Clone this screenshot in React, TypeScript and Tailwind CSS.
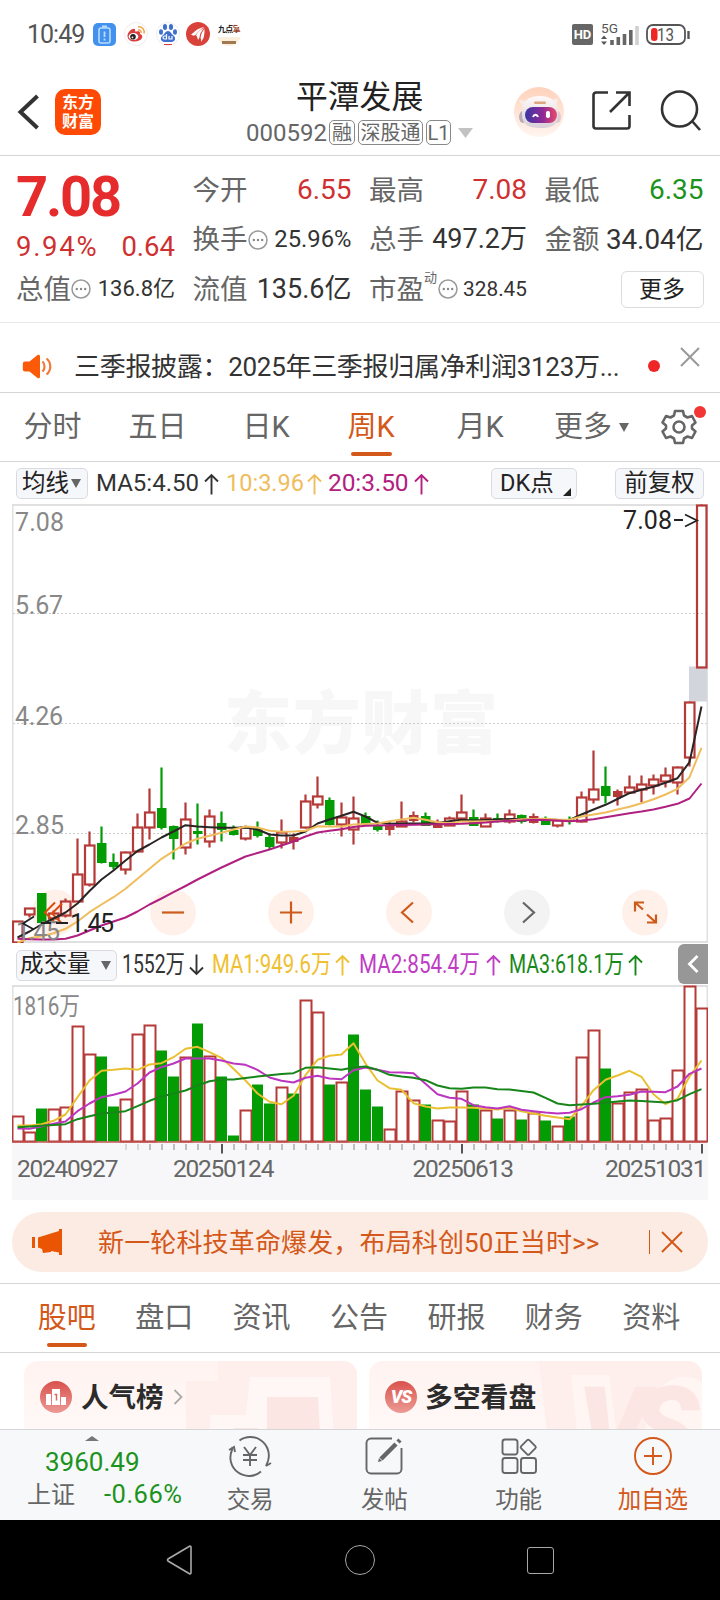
import type { ReactNode } from "react";

type Kind = "up" | "solid" | "down";

// [kind, high, body top, body bottom, low]
const candles: [Kind, number, number, number, number][] = [
  ["up", 921, 921, 942, 942],
  ["up", 908, 908, 914, 917],
  ["down", 893, 893, 922, 923],
  ["up", 910, 913, 918, 918],
  ["up", 898, 901, 915, 917],
  ["up", 838, 874, 901, 901],
  ["up", 831, 845, 884, 886],
  ["down", 826, 843, 862, 863],
  ["down", 853, 862, 866, 869],
  ["up", 851, 852, 869, 874],
  ["up", 813, 827, 851, 852],
  ["up", 788, 812, 827, 839],
  ["down", 767, 808, 827, 829],
  ["down", 825, 826, 838, 859],
  ["up", 802, 819, 847, 854],
  ["down", 803, 831, 833, 844],
  ["up", 809, 816, 841, 847],
  ["down", 811, 823, 829, 841],
  ["down", 825, 830, 834, 835],
  ["up", 825, 827, 838, 840],
  ["down", 821, 828, 835, 837],
  ["down", 833, 837, 846, 849],
  ["up", 819, 832, 842, 848],
  ["solid", 833, 837, 841, 849],
  ["up", 794, 801, 827, 828],
  ["up", 776, 796, 804, 808],
  ["down", 797, 800, 824, 825],
  ["up", 802, 817, 824, 836],
  ["up", 796, 818, 829, 844],
  ["down", 812, 816, 823, 823],
  ["down", 820, 825, 829, 831],
  ["solid", 821, 826, 829, 835],
  ["up", 801, 821, 826, 826],
  ["solid", 811, 815, 820, 822],
  ["down", 812, 816, 825, 825],
  ["solid", 819, 822, 827, 827],
  ["up", 816, 818, 825, 825],
  ["up", 794, 812, 818, 818],
  ["down", 809, 817, 825, 825],
  ["up", 813, 818, 826, 826],
  ["down", 813, 818, 820, 822],
  ["up", 809, 814, 821, 823],
  ["down", 814, 815, 821, 823],
  ["solid", 813, 816, 822, 823],
  ["down", 816, 818, 824, 824],
  ["up", 820, 820, 825, 827],
  ["down", 816, 819, 821, 824],
  ["up", 791, 797, 821, 822],
  ["up", 750, 789, 799, 803],
  ["down", 766, 786, 795, 803],
  ["solid", 789, 791, 796, 805],
  ["up", 775, 787, 792, 793],
  ["up", 775, 784, 789, 802],
  ["up", 774, 779, 785, 794],
  ["up", 767, 775, 781, 787],
  ["up", 766, 767, 782, 794],
  ["up", 701, 702, 757, 766],
  ["up", 504, 505, 667, 667],
];

const volumeTops = [
  1116, 1132, 1108, 1109, 1107, 1026, 1054, 1056, 1106, 1099, 1034, 1025, 1050, 1076, 1057, 1023, 1056, 1076, 1135,
  1110, 1084, 1103, 1087, 1093, 1000, 1012, 1084, 1082, 1034, 1089, 1106, 1129, 1091, 1100, 1104, 1120, 1121, 1091,
  1104, 1110, 1118, 1110, 1119, 1113, 1120, 1126, 1116, 1057, 1030, 1068, 1103, 1092, 1089, 1120, 1118, 1070, 986,
  1008,
];
const volumeDown = [2, 7, 8, 12, 13, 15, 17, 18, 20, 21, 23, 26, 28, 29, 30, 34, 38, 40, 42, 44, 46, 49];

const ma5 = [
  937, 931, 924, 918, 912, 903, 890.5, 879, 870, 860, 850.5, 844, 837, 831, 824.7, 826, 826.7, 827.3, 827.3, 827, 829,
  834, 835, 835, 831, 823, 819, 815.3, 811.3, 816, 822.3, 823.3, 823, 823, 823, 822.5, 820.7, 819.3, 820, 819.5, 819,
  818.5, 818.5, 818.7, 819, 819.5, 819.5, 814, 809, 804.3, 798.5, 792.7, 789.3, 786.3, 782.3, 777.7, 761.7, 706,
];
const ma10 = [
  942, 937.5, 936, 932.7, 928.3, 921, 911.7, 904, 896.7, 888.3, 878.3, 868.3, 858.3, 850.7, 843, 838.3, 835.3, 832.3,
  829, 826, 827, 830.3, 831.3, 831, 830.3, 825.7, 826, 826, 824, 823.5, 823, 820.7, 819, 817.3, 819.3, 821.7, 822.7,
  821, 821, 820.7, 820.5, 820, 818.7, 818.5, 818.3, 819, 819.3, 816, 814, 812, 809, 806.3, 802.7, 798.7, 794, 788.3,
  776.7, 747.3,
];
const ma20 = [
  938.3, 938.7, 939, 939, 938.3, 935, 930, 925, 921, 917, 911, 904, 898, 891.7, 885.5, 879, 873, 867, 861.5, 856, 852.5,
  849, 845, 841, 836, 832, 830.3, 828.7, 826.5, 825.3, 825, 824.7, 824.5, 824.3, 824, 823.7, 823.5, 823.3, 822.7, 822,
  821, 820.3, 820, 819.3, 819.5, 820, 820.7, 820, 818.7, 816.7, 814.7, 812.7, 811, 809, 806.3, 803.3, 798, 783,
];
const vol1 = [
  1125, 1125, 1123.7, 1120.3, 1114, 1096.7, 1080, 1070.3, 1069.3, 1068, 1069.3, 1064, 1062.7, 1056.7, 1048.3, 1046.3,
  1051.7, 1057.3, 1068.3, 1080, 1093, 1101.3, 1103.7, 1095.3, 1074.7, 1059.3, 1055.3, 1054, 1042.7, 1063, 1080, 1087.7,
  1089.3, 1102.7, 1106, 1108, 1107, 1107, 1107.3, 1108, 1109, 1107.3, 1110.7, 1113, 1115.3, 1117, 1118.7, 1105.7,
  1089.7, 1079.3, 1075, 1070.3, 1076.3, 1093.7, 1103.7, 1098.3, 1076, 1060,
];
const vol2 = [
  1128, 1128.3, 1126, 1123.3, 1121, 1110.7, 1103, 1096.7, 1094.3, 1091, 1083, 1072, 1066.7, 1063, 1058, 1058, 1058,
  1060, 1063, 1064.3, 1069.3, 1077, 1080.3, 1082, 1077.3, 1075.3, 1078, 1078.7, 1069.7, 1067, 1069.3, 1071.7, 1072,
  1072.7, 1083.3, 1093.7, 1097.3, 1098.3, 1104.7, 1106.7, 1108, 1105.7, 1109.3, 1110.7, 1112, 1113, 1112.3, 1108.7,
  1102, 1096.7, 1095.7, 1094.3, 1091, 1091.3, 1091.7, 1086, 1073.3, 1068,
];
const vol3 = [
  1126.7, 1126, 1125.3, 1124.5, 1123.7, 1118.7, 1115.7, 1113, 1112, 1110.7, 1105.7, 1100.3, 1096, 1093, 1090, 1085,
  1080.7, 1079, 1079, 1077.5, 1076, 1074.7, 1073.5, 1072.7, 1067.3, 1066.7, 1068, 1069.3, 1067, 1066, 1069.3, 1074.3,
  1076, 1077.3, 1079.7, 1085, 1087.7, 1088.3, 1087, 1087, 1088.7, 1089, 1090.5, 1092, 1097.3, 1103, 1104.7, 1104,
  1103.3, 1102.3, 1101, 1100, 1100.5, 1101.3, 1102, 1099.7, 1093.7, 1088.7,
];

const RED = "#b53a38";
const GREEN = "#049c04";
const cx = (i: number) => 17.5 + i * 12;
const toPoints = (ys: number[]) => ys.map((y, i) => `${cx(i)},${y}`).join(" ");

function Line({ ys, color }: { ys: number[]; color: string }) {
  return <polyline points={toPoints(ys)} fill="none" stroke={color} strokeWidth="2" strokeLinejoin="round" />;
}

function Arrow({ down = false }: { down?: boolean }) {
  return (
    <svg width="15" height="22" viewBox="0 0 15 22" className={`shrink-0 ${down ? "rotate-180" : ""}`}>
      <path d="M7.5 21.5V2M1 8.5 7.5 2 14 8.5" fill="none" stroke="currentColor" strokeWidth="1.9" />
    </svg>
  );
}

function Caret({ className = "" }: { className?: string }) {
  return (
    <svg width="10" height="9" viewBox="0 0 10 9" className={`shrink-0 ${className}`}>
      <path d="M0 0h10L5 9z" fill="currentColor" />
    </svg>
  );
}

function StatusBar() {
  return (
    <div className="flex h-[68px] items-center pl-[27px] pr-[30px] text-[#555]">
      <span className="w-[66px] text-[25px] tracking-[-1px]">10:49</span>
      <svg width="23" height="23" viewBox="0 0 23 23">
        <rect width="23" height="23" rx="5" fill="#4391ee" />
        <rect x="6" y="5" width="11" height="15" rx="2" fill="none" stroke="#b9dbff" strokeWidth="1.6" />
        <path d="M9 3.5h5M11.5 8.5v5.5M11.5 15.5v2" stroke="#b9dbff" strokeWidth="1.8" />
      </svg>
      <svg width="24" height="24" viewBox="0 0 24 24" className="ml-2">
        <circle cx="12" cy="12" r="11.5" fill="#fff" stroke="#eee" />
        <path d="M3.5 14c0-4 5-8 7-7 1.500.8 0 2.500 1 2.500s4.500-1 4.500 1c0 1-.5 1.500 1 2 3 1.500 1 7-6.500 7-4 0-7-2-7-5.500z" fill="#dc3d3d" />
        <ellipse cx="9.500" cy="14.500" rx="4.800" ry="3.600" fill="#fff" />
        <circle cx="9" cy="14.800" r="2.800" fill="#222" />
        <circle cx="8.500" cy="15.300" r="0.900" fill="#fff" />
        <path d="M14 8c2-.5 3.500 1 3 3M14 5c4-.8 7 2.500 6 6.500" fill="none" stroke="#f0a64a" strokeWidth="1.500" />
      </svg>
      <svg width="24" height="24" viewBox="0 0 24 24" className="ml-2">
        <circle cx="12" cy="12" r="11.5" fill="#fff" stroke="#eee" />
        <g fill="#3f70cf">
          <ellipse cx="9" cy="5" rx="2.100" ry="3" />
          <ellipse cx="15" cy="5" rx="2.100" ry="3" />
          <ellipse cx="5" cy="10" rx="2" ry="2.800" />
          <ellipse cx="19" cy="10" rx="2" ry="2.800" />
          <path d="M12 9c2.500 0 3.500 3 5.500 4.500 3 2.500 1.500 6.500-2 6.500H8.500c-3.500 0-5-4-2-6.500C8.500 12 9.500 9 12 9z" />
        </g>
        <path d="M10.500 12v5h-2a1.500 1.500 0 0 1 0-3h2M13 14v3h3v-3" fill="none" stroke="#fff" strokeWidth="1.200" />
        <path d="M8 22.500h8" stroke="#dc3d3d" />
      </svg>
      <svg width="24" height="24" viewBox="0 0 24 24" className="ml-1.5">
        <circle cx="12" cy="12" r="12" fill="#d8423a" />
        <path
          d="M5 12.500C8 11 9 7 18.500 5 15 7 12 9 10 12.500c-1.500 1.500-3 1.500-5 0zM10 13.500c2-4 4.500-6 8.500-7.500-3 3-4.500 5-5 9.500l-1.500 2.500c-.5-2-.5-3-2-4.500zM14.500 16c.5-4 2-7 4-9 0 4-.2 6-1 9l-2.500 4c.3-2 .2-2.500-.5-4z"
          fill="#fff"
        />
      </svg>
      <div className="ml-[7px] flex h-6 w-6 flex-col overflow-hidden rounded-full bg-[#fbeedd] text-center">
        <span className="-mx-2 h-[15px] whitespace-nowrap bg-white pt-1 text-[8px] font-bold tracking-[-0.5px] text-[#222]">
          九点<span className="text-[#9c3b20]">掌</span>
        </span>
        <span className="mx-auto mt-1 h-[3px] w-3.5 bg-[#a1784f]" />
      </div>

      <div className="ml-auto flex items-center">
        <span className="flex h-[21px] w-[21px] items-center justify-center rounded-[2px] bg-[#666] text-[13px] font-bold text-white">
          HD
        </span>
        <svg width="40" height="23" viewBox="0 0 40 23" className="ml-[7px]">
          <text x="1" y="9.500" fontSize="12.500" fill="#555" textLength="17" lengthAdjust="spacingAndGlyphs">
            5G
          </text>
          <path d="M1 16h6L4 12.500zM1 18.500h6L4 22z" fill="#555" />
          <path d="M12 22v-5M18.300 22v-8M24.500 22V11M30.800 22V7" stroke="#666" strokeWidth="3.600" />
          <path d="M37 22V3" stroke="#d0d0d0" strokeWidth="3.600" />
        </svg>
        <svg width="44" height="21" viewBox="0 0 44 21" className="ml-1.5">
          <rect x="1" y="1" width="38" height="19" rx="6" fill="none" stroke="#555" strokeWidth="1.800" />
          <rect x="5" y="4" width="6.500" height="13" rx="3" fill="#ee2626" />
          <text x="11" y="16.800" fontSize="18" fill="#555" textLength="17" lengthAdjust="spacingAndGlyphs">
            13
          </text>
          <path d="M42.500 7v8" stroke="#555" strokeWidth="2.400" />
        </svg>
      </div>
    </div>
  );
}

function Tag({ children, className }: { children: ReactNode; className: string }) {
  return (
    <span
      className={`flex h-[25px] items-center justify-center whitespace-nowrap rounded-[5px] border-[1.5px] border-[#888] text-[20px] text-[#666] ${className}`}
    >
      {children}
    </span>
  );
}

function Header() {
  return (
    <header className="flex h-[88px] items-center border-b border-[#d4d4d4]">
      <svg width="22" height="36" viewBox="0 0 22 36" className="ml-[17px]">
        <path d="M20.500 2 3.500 18l17 16" fill="none" stroke="#333" strokeWidth="4" />
      </svg>
      <div className="ml-4 grid h-[46px] w-[46px] content-center rounded-[10px] bg-[#fe4a04] text-center text-[16px] font-bold leading-[19px] text-white">
        <span>东方</span>
        <span>财富</span>
      </div>
      <div className="ml-[145px] flex w-[226px] flex-col items-start pt-[3px]">
        <h1 className="ml-[50px] text-[31.8px] leading-[39px] text-[#222]">平潭发展</h1>
        <div className="flex h-[32px] items-center gap-[3px]">
          <span className="w-[80px] text-[24px] text-[#666]">000592</span>
          <Tag className="w-[26px]">融</Tag>
          <Tag className="w-[65px]">深股通</Tag>
          <Tag className="w-[25px]">L1</Tag>
          <svg width="15" height="10" viewBox="0 0 15 10" className="ml-1">
            <path d="M0 0h15L7.500 10z" fill="#c2c2c2" />
          </svg>
        </div>
      </div>
      <svg width="50" height="50" viewBox="0 0 50 50" className="ml-[42px]">
        <defs>
          <linearGradient id="halo" x1="0" y1="0" x2="0" y2="1">
            <stop offset="0" stopColor="#ffd2bb" />
            <stop offset="1" stopColor="#fff5f0" />
          </linearGradient>
          <linearGradient id="visor">
            <stop offset="0" stopColor="#3936a4" />
            <stop offset="0.550" stopColor="#8c2a98" />
            <stop offset="1" stopColor="#ea4a68" />
          </linearGradient>
          <linearGradient id="shell" x1="0" y1="0" x2="0" y2="1">
            <stop offset="0" stopColor="#fffaf8" />
            <stop offset="1" stopColor="#d9d0d8" />
          </linearGradient>
        </defs>
        <circle cx="25" cy="25" r="25" fill="url(#halo)" />
        <path d="m5 13 10 1-5 8zM44 11l-9 3 7 8z" fill="#f6ece9" />
        <ellipse cx="9" cy="30" rx="4" ry="6" fill="#b9aeb8" />
        <ellipse cx="43" cy="30" rx="4" ry="6" fill="#dccbd0" />
        <path d="M8 27C8 14 14 9 26 9s18 6 18 18-7 14-18 14S8 38 8 27z" fill="url(#shell)" />
        <rect x="20" y="14.500" width="12" height="2.500" rx="1.200" fill="#dfa57e" />
        <rect x="11" y="20" width="32" height="16" rx="8" fill="url(#visor)" />
        <path d="M19 30c1-3 4-3 5 0" fill="none" stroke="#fff" strokeWidth="2" />
        <rect x="32" y="24" width="4" height="7" rx="1.800" fill="#fff" />
      </svg>
      <svg width="40" height="40" viewBox="0 0 40 40" className="-mt-1 ml-[27px]" fill="none" stroke="#333" strokeWidth="2.600">
        <path d="M17 2.500H5a2.500 2.500 0 0 0-2.500 2.500v31A2.500 2.500 0 0 0 5 38.500h31a2.500 2.500 0 0 0 2.500-2.500V25M25 2.500h13.500V16M38 3 19 22" />
      </svg>
      <svg width="42" height="42" viewBox="0 0 42 42" className="-mt-1 ml-[29px]" fill="none" stroke="#333" strokeWidth="2.600">
        <circle cx="19.500" cy="20" r="17.500" />
        <path d="m32 32 8 9" />
      </svg>
    </header>
  );
}

function Dots() {
  return (
    <svg width="20" height="20" viewBox="0 0 20 20" className="shrink-0">
      <circle cx="10" cy="10" r="9" fill="none" stroke="#999" strokeWidth="1.500" />
      <g fill="#888">
        <circle cx="5.800" cy="10" r="1.200" />
        <circle cx="10" cy="10" r="1.200" />
        <circle cx="14.200" cy="10" r="1.200" />
      </g>
    </svg>
  );
}

function Stat({
  label,
  value,
  dots,
  sup,
  className = "text-[27px] text-[#333]",
}: {
  label: string;
  value: string;
  dots?: boolean;
  sup?: string;
  className?: string;
}) {
  return (
    <div className="flex h-[49.5px] items-center whitespace-nowrap">
      <span className="text-[27.5px] text-[#666]">{label}</span>
      {sup && <span className="mb-6 w-[14px] text-[13px] text-[#666]">{sup}</span>}
      {dots && <Dots />}
      <span className={`ml-auto ${className}`}>{value}</span>
    </div>
  );
}

function Quote() {
  return (
    <section className="grid h-[167px] grid-cols-[159px_159px_158px_159px] gap-x-[17.5px] border-b border-[#e8e8e8] pl-4 pt-[9.5px]">
      <div>
        <div className="flex h-[63px] items-center text-[56px] font-bold tracking-[-2.2px] text-[#e52b2b]">7.08</div>
        <div className="flex h-[36px] items-center justify-between text-[27.5px] text-[#cf3131]">
          <span className="tracking-[1.7px]">9.94%</span>
          <span>0.64</span>
        </div>
        <Stat label="总值" value="136.8亿" dots className="text-[22px] text-[#333]" />
      </div>
      <div>
        <Stat label="今开" value="6.55" className="text-[28px] text-[#cf3131]" />
        <Stat label="换手" value="25.96%" dots className="text-[23.8px] text-[#333]" />
        <Stat label="流值" value="135.6亿" />
      </div>
      <div>
        <Stat label="最高" value="7.08" className="text-[28px] text-[#cf3131]" />
        <Stat label="总手" value="497.2万" />
        <Stat label="市盈" sup="动" value="328.45" dots className="text-[20.8px] text-[#333]" />
      </div>
      <div>
        <Stat label="最低" value="6.35" className="text-[28px] text-[#1c931c]" />
        <Stat label="金额" value="34.04亿" className="text-[27.8px] text-[#333]" />
        <div className="flex h-[49.5px] items-center justify-end">
          <button className="h-[37px] w-[83px] rounded-md border border-[#dcdcdc] text-[23px] text-[#222]">更多</button>
        </div>
      </div>
    </section>
  );
}

function News() {
  return (
    <div className="flex h-[70px] items-center border-b border-[#d4d4d4] pt-[17px]">
      <svg width="30" height="25" viewBox="0 0 30 25" className="ml-[22px]">
        <path d="M3 7.500h4.500L15.500 1c1-.7 2.500-.2 2.500 1.200v20.600c0 1.400-1.500 1.900-2.500 1.200L7.500 17.500H3a2.200 2.200 0 0 1-2.200-2.200V9.700A2.200 2.200 0 0 1 3 7.500z" fill="#fb5a09" />
        <path d="M20.500 7.500c2.700 2.500 2.700 7.500 0 10M24.500 4.500c5 4 5 12 0 16" fill="none" stroke="#f07a38" strokeWidth="2.200" />
      </svg>
      <p className="ml-[22px] w-[550px] whitespace-nowrap pt-0.5 text-[26px] tracking-[-0.3px] text-[#333]">
        三季报披露：2025年三季报归属净利润3123万...
      </p>
      <span className="ml-6 h-3 w-3 rounded-full bg-[#ee2626]" />
      <svg width="20" height="20" viewBox="0 0 20 20" className="-mt-[18px] ml-5">
        <path d="m1 1 18 18M19 1 1 19" stroke="#999" strokeWidth="2" />
      </svg>
    </div>
  );
}

const periods = [
  { label: "分时", className: "w-[105px]" },
  { label: "五日", className: "w-[105px]" },
  { label: "日K", className: "w-[112px]" },
  { label: "周K", className: "w-[98px]", active: true },
  { label: "月K", className: "w-[120px]" },
];

function PeriodTabs() {
  return (
    <nav className="flex h-[69px] items-stretch border-b border-[#d4d4d4] text-[29px] text-[#666]">
      {periods.map((p) => (
        <div key={p.label} className={`relative flex items-center justify-center ${p.className} ${p.active ? "text-[#d4581a]" : ""}`}>
          {p.label}
          {p.active && <span className="absolute bottom-[5px] h-1 w-[41px] rounded-full bg-[#d4581a]" />}
        </div>
      ))}
      <div className="flex items-center pl-[14px]">
        更多
        <Caret className="ml-[7px]" />
      </div>
      <div className="relative ml-auto mr-[22px] flex w-[38px] items-center justify-center">
        <svg width="38" height="36" viewBox="-19 -18 38 36" fill="none" stroke="#666" strokeWidth="2.600">
          <path d="M-4-16H4L5-11.500 8.500-9.500 13-11 16.500-4.500 13-1.500V1.500L16.500 4.500 13 11 8.500 9.500 5 11.500 4 16H-4L-5 11.500-8.500 9.500-13 11-16.500 4.500-13 1.500V-1.500L-16.500-4.500-13-11-8.500-9.500-5-11.500z" strokeLinejoin="round" />
          <circle r="5.500" />
        </svg>
        <span className="absolute right-[-8px] top-[13px] h-3 w-3 rounded-full bg-[#f23535]" />
      </div>
    </nav>
  );
}

function Chip({ children, className }: { children: ReactNode; className: string }) {
  return (
    <span className={`flex h-[31px] shrink-0 items-center rounded-[5px] border border-[#dadbe1] bg-[#f6f7fa] text-[23.5px] text-[#222] ${className}`}>
      {children}
    </span>
  );
}

function MaRow() {
  return (
    <div className="flex h-[42px] items-center whitespace-nowrap pl-4 pt-px text-[24.5px]">
      <Chip className="w-[72px] pl-[5px]">
        均线
        <Caret className="ml-0.5 text-[#666]" />
      </Chip>
      <span className="ml-[8px] w-[108px] text-[#333]">
        <span className="inline-block origin-left scale-x-[0.98]">MA5:4.50</span>
      </span>
      <span className="flex text-[#333]">
        <Arrow />
      </span>
      <span className="ml-[7px] flex w-[96px] items-center justify-between text-[#efbd5d]">
        <span className="w-[78px] origin-left scale-x-[0.96]">10:3.96</span>
        <Arrow />
      </span>
      <span className="ml-[6px] flex w-[101px] items-center justify-between text-[#b32080]">
        <span className="tracking-[-0.1px]">20:3.50</span>
        <Arrow />
      </span>
      <Chip className="ml-[62px] w-[86px] pl-[8px]">
        DK点
        <svg width="8" height="8" viewBox="0 0 8 8" className="ml-[9px] mt-4">
          <path d="M8 0v8H0z" fill="#222" />
        </svg>
      </Chip>
      <Chip className="ml-[38px] w-[89px] justify-center">前复权</Chip>
    </div>
  );
}

const chartButtons = [
  { x: 173, d: "M-11 0H11" },
  { x: 291, d: "M-11 0H11M0-11V11" },
  { x: 409, d: "M4-10-7 0 4 10" },
  { x: 527, d: "M-4-10 7 0-4 10", muted: true },
  { x: 645, d: "M-10-1V-10H-1M-10-10-2-3M2 2 11 10M11 2V10H2" },
];

function PriceChart() {
  return (
    <svg width="696" height="439" viewBox="12 503.500 696 439" className="ml-3 block">
      <text x="224" y="747" fontSize="68" fontWeight="900" fill="#f7f7f7" textLength="274">
        东方财富
      </text>
      <g stroke="#ccc" strokeDasharray="2 2">
        <path d="M13 613H707M13 723H707M13 833H707" />
      </g>
      <path d="M12.500 942V504.500H707.500V942" fill="none" stroke="#e0e0e0" strokeWidth="2" />
      <path d="M12 941.500H708" stroke="#e0e0e0" strokeWidth="2" />
      <circle cx="55" cy="912" r="23" fill="#fff0e9" />
      {chartButtons.map((b) => (
        <g key={b.x} transform={`translate(${b.x} 912)`}>
          <circle r="23" fill={b.muted ? "#f3f3f3" : "#fff0e9"} />
          <path d={b.d} fill="none" stroke={b.muted ? "#666" : "#cd5c1c"} strokeWidth="2.200" />
        </g>
      ))}
      <rect x="689" y="666" width="18" height="35" fill="#d2d5db" />

      {candles.map(([kind, high, top, bottom, low], i) => {
        const color = kind === "down" ? GREEN : RED;
        return (
          <g key={i} stroke={color} strokeWidth="2.200">
            <path d={`M${cx(i)} ${high}V${top}M${cx(i)} ${bottom}V${low}`} />
            {kind === "up" ? (
              <rect x={cx(i) - 4.5} y={top} width="9.500" height={bottom - top} fill="none" />
            ) : (
              <rect x={cx(i) - 4} y={top} width="8.500" height={bottom - top} fill={color} strokeWidth="1" />
            )}
          </g>
        );
      })}
      <path d="M55 902 45 912 55 922M62 903 52 913 62 923" fill="none" stroke="#dc4c10" strokeWidth="2" />
      <Line ys={ma5} color="#2b2424" />
      <Line ys={ma10} color="#efbd5d" />
      <Line ys={ma20} color="#b02080" />

      <g fontSize="25" fill="#888">
        <text x="15" y="530" textLength="49">7.08</text>
        <text x="15" y="613.500" textLength="48">5.67</text>
        <text x="15" y="724" textLength="48">4.26</text>
        <text x="15" y="833" textLength="49">2.85</text>
        <text x="16" y="939" textLength="44">1.45</text>
      </g>
      <g fontSize="25" fill="#222">
        <text x="623" y="528" textLength="49">7.08</text>
        <text x="70" y="931" textLength="44">1.45</text>
      </g>
      <path d="M674 519.500h9M685 514l12 6-12 6M34 916l-11 7 11 6M41 922.500h10M56 922.500h12" fill="none" stroke="#222" strokeWidth="1.800" />
    </svg>
  );
}

function VolumeRow() {
  return (
    <div className="flex h-[42px] items-center whitespace-nowrap pl-4 pt-0.5 text-[25.5px]">
      <Chip className="w-[101px] pl-[3px]">
        成交量
        <Caret className="ml-[10px] text-[#666]" />
      </Chip>
      <span className="ml-[5px] w-[67px] text-[#333]">
        <span className="inline-block origin-left scale-x-[0.76]">1552万</span>
      </span>
      <span className="flex text-[#333]">
        <Arrow down />
      </span>
      <span className="ml-2 flex w-[139px] items-center text-[#efc030]">
        <span className="inline-block w-[123px] origin-left scale-x-[0.8]">MA1:949.6万</span>
        <Arrow />
      </span>
      <span className="ml-[8px] flex w-[141px] items-center text-[#bf3cc4]">
        <span className="inline-block w-[127px] origin-left scale-x-[0.81]">MA2:854.4万</span>
        <Arrow />
      </span>
      <span className="ml-[9px] flex w-[134px] items-center text-[#17891a]">
        <span className="inline-block w-[119px] origin-left scale-x-[0.77]">MA3:618.1万</span>
        <Arrow />
      </span>
      <button className="-mt-0.5 ml-auto mr-3 flex h-10 w-[30px] items-center justify-center rounded-l-md bg-[#979797]">
        <svg width="12" height="20" viewBox="0 0 12 20">
          <path d="m10.500 2-8 8 8 8" fill="none" stroke="#fff" strokeWidth="2.800" />
        </svg>
      </button>
    </div>
  );
}

function VolumeChart() {
  return (
    <svg width="696" height="158" viewBox="12 984.500 696 158" className="ml-3 block">
      <path d="M12.500 1141V985.500H707.500V1141" fill="none" stroke="#e0e0e0" strokeWidth="2" />
      {volumeTops.map((top, i) =>
        volumeDown.includes(i) ? (
          <rect key={i} x={cx(i) - 5.5} y={top} width="11" height={1141 - top} fill={GREEN} />
        ) : (
          <rect key={i} x={cx(i) - 5} y={top} width="11" height={1141 - top} fill="#fff" stroke={RED} strokeWidth="2" />
        ),
      )}
      <path d="M12 1141.500H707" stroke="#c05550" strokeWidth="1.500" />
      <Line ys={vol1} color="#e9c030" />
      <Line ys={vol2} color="#bb35c0" />
      <Line ys={vol3} color="#17851a" />
      <text x="13" y="1014" fontSize="25" fill="#888" textLength="67" lengthAdjust="spacingAndGlyphs">
        1816万
      </text>
    </svg>
  );
}

function TimeAxis() {
  return (
    <div className="mx-3 h-[57px] bg-[#f7f7f9] text-[24.5px] tracking-[-1.25px] text-[#666]">
      <svg width="696" height="11" viewBox="12 1143 696 11" className="block">
        {Array.from({ length: 49 }, (_, k) => k + 9).map((i) => {
          const major = i === 17 || i === 37 || i === 57;
          return (
            <path
              key={i}
              d={`M${cx(i) + 0.5} 1144V${major ? 1153.5 : 1150}`}
              stroke={major ? "#555" : "#aaa"}
              strokeWidth={major ? 2 : 1.5}
              opacity={i < 11 ? 0.5 : 1}
            />
          );
        })}
      </svg>
      <div className="flex pl-[5px] pt-[2.5px]">
        <span className="w-[156px]">20240927</span>
        <span className="w-[239.5px]">20250124</span>
        <span className="w-[192.5px]">20250613</span>
        <span>20251031</span>
      </div>
    </div>
  );
}

function Banner() {
  return (
    <div className="mx-3 mt-3 flex h-[60px] items-center rounded-full bg-[#fcebe2] text-[#d4581a]">
      <svg width="32" height="28" viewBox="0 0 32 28" className="ml-5">
        <path d="M0 9h3v11H0zM6 9.500 27 3V1h3v26h-3v-2.500l-8-1.500v1l-8 1-1-4-4-1.500z" fill="#ea5504" />
      </svg>
      <p className="ml-[34px] w-[540px] whitespace-nowrap pt-px text-[26px] tracking-[0.15px]">
        新一轮科技革命爆发，布局科创50正当时&gt;&gt;
      </p>
      <span className="ml-[11px] h-6 w-px bg-[#d4581a]" />
      <svg width="22" height="22" viewBox="0 0 22 22" className="ml-[11px]">
        <path d="m1 1 20 20M21 1 1 21" stroke="#d4581a" strokeWidth="2" />
      </svg>
    </div>
  );
}

const sections = ["股吧", "盘口", "资讯", "公告", "研报", "财务", "资料"];

function SectionTabs() {
  return (
    <nav className="mt-[11px] grid h-[70px] grid-cols-7 border-y border-[#d6d6d8] pl-[18px] pr-5 text-[29px] text-[#666]">
      {sections.map((s, i) => (
        <div key={s} className={`relative flex items-center justify-center ${i === 0 ? "text-[#d4581a]" : ""}`}>
          {s}
          {i === 0 && <span className="absolute bottom-[5px] h-1 w-10 rounded-full bg-[#d4581a]" />}
        </div>
      ))}
    </nav>
  );
}

function Cards() {
  return (
    <div className="flex h-[76px] gap-3 overflow-hidden px-6 pt-2">
      <div className="relative h-[90px] w-[333px] shrink-0 overflow-hidden rounded-[14px] bg-gradient-to-b from-[#fff3f1] to-[#fffaf8]">
        <svg width="171" height="90" viewBox="0 0 171 90" className="absolute right-0 top-0">
          <path d="M32 0H171V90H0V20H32z" fill="#feefed" />
          <path d="M64 16H144l5 74H24V54H60z" fill="#fff7f5" />
          <path d="M81 36h51l3 54H81zM48 67h24v23H44z" fill="#fce6e4" />
        </svg>
        <div className="relative flex h-[72px] items-center pl-4">
          <svg width="32" height="32" viewBox="0 0 32 32">
            <defs>
              <linearGradient id="rank" x1="0" y1="0" x2="0" y2="1">
                <stop offset="0" stopColor="#d9514d" />
                <stop offset="1" stopColor="#ec9a95" />
              </linearGradient>
            </defs>
            <circle cx="16" cy="16" r="16" fill="url(#rank)" />
            <path d="M6 13h5v11H6zM12 8h8v16h-8zM21 16h5v8h-5z" fill="#fff" />
            <path d="M14.500 13.500h2v6" fill="none" stroke="#de6660" strokeWidth="1.500" />
          </svg>
          <span className="ml-[9px] pt-0.5 text-[27.5px] font-bold text-[#2b2b2b]">人气榜</span>
          <svg width="10" height="16" viewBox="0 0 10 16" className="ml-[9px]">
            <path d="m1.500 1 7 7-7 7" fill="none" stroke="#aaa" strokeWidth="1.800" />
          </svg>
        </div>
      </div>
      <div className="relative h-[90px] w-[333px] shrink-0 overflow-hidden rounded-[14px] bg-gradient-to-b from-[#fff3f1] to-[#fffaf8]">
        <svg width="163" height="90" viewBox="0 0 163 90" className="absolute right-0 top-0">
          <path d="M0 0H163V90H10z" fill="#feefed" />
          <path d="M32 14H70L80 90H40zM98 90l22-60c8-16 34-18 43-8v68z" fill="#fff5f3" />
          <text x="38" y="106" fontSize="112" fontWeight="900" fontStyle="italic" fill="#fce6e4" textLength="122">
            VS
          </text>
        </svg>
        <div className="relative flex h-[72px] items-center pl-4">
          <span className="flex h-8 w-8 items-center justify-center rounded-full bg-gradient-to-b from-[#d9514d] to-[#ec9a95] text-[18px] font-black italic tracking-[-1px] text-white">
            VS
          </span>
          <span className="ml-2 pt-0.5 text-[27.8px] font-bold text-[#2b2b2b]">多空看盘</span>
        </div>
      </div>
    </div>
  );
}

function Action({ label, children, className = "text-[#666]" }: { label: string; children: ReactNode; className?: string }) {
  return (
    <div className={`flex w-[134.25px] flex-col items-center pt-1 ${className}`}>
      <svg width="44" height="44" viewBox="-22 -22 44 44" fill="none" stroke="currentColor" strokeWidth="1.900">
        {children}
      </svg>
      <span className="mt-[11px] text-[23.5px]">{label}</span>
    </div>
  );
}

function BottomBar() {
  return (
    <footer className="flex h-[91px] border-t border-[#d5d5da] bg-[#f6f8fa]">
      <div className="w-[183px] pt-[6px] text-[#1c931c]">
        <svg width="14" height="5" viewBox="0 0 14 5" className="ml-[85px] block">
          <path d="M7 0 14 5H0z" fill="#777" />
        </svg>
        <div className="pl-[45px] pt-[8px] text-[26px]">3960.49</div>
        <div className="flex items-center pl-[27px] pt-[7px]">
          <span className="w-[77px] text-[24px] text-[#666]">上证</span>
          <span className="text-[25.5px] tracking-[0.5px]">-0.66%</span>
        </div>
      </div>
      <Action label="交易">
        <path d="M-10.500-15.500A18.500 18.500 0 0 1 18 5l-2 5M16 10l5-3M11 15.500A18.500 18.500 0 0 1-18-6l.5-3M-21-6l5-3 1 5" />
        <path d="M-6-9 0-1 6-9M0-1V10M-7-1H7M-7 4H7" />
      </Action>
      <Action label="发帖">
        <path d="M8-17.500H-13A4.500 4.500 0 0 0-17.500-13v26A4.500 4.500 0 0 0-13 17.500h26A4.500 4.500 0 0 0 17.500 13V-8" />
        <path d="M-3 3 12-12M14-14l2-2" strokeWidth="4.500" />
        <path d="M-6 6l1-4 3 3z" fill="currentColor" stroke="none" />
      </Action>
      <Action label="功能">
        <rect x="-16.500" y="-16.500" width="15" height="15" rx="2.500" />
        <rect x="-16.500" y="2" width="15" height="15" rx="2.500" />
        <rect x="2" y="2" width="15" height="15" rx="2.500" />
        <rect x="3.500" y="-14.500" width="11.500" height="11.500" rx="1.500" transform="rotate(45 9.250 -8.750)" />
      </Action>
      <Action label="加自选" className="text-[#d4581a]">
        <circle r="18" />
        <path d="M-9 0H9M0-9V9" />
      </Action>
    </footer>
  );
}

function SystemNav() {
  return (
    <div className="grid h-[80px] grid-cols-3 items-center justify-items-center bg-black px-[90px]">
      <svg width="28" height="32" viewBox="0 0 28 32">
        <path d="M25 3v26a1 1 0 0 1-1.500.8L2 17q-1-1 0-2L23.500 2.200A1 1 0 0 1 25 3z" fill="none" stroke="#a8a8a8" strokeWidth="1.600" />
      </svg>
      <span className="h-[30px] w-[30px] rounded-full border-[1.5px] border-[#a8a8a8]" />
      <span className="h-[27px] w-[27px] rounded-[3px] border-[1.5px] border-[#a8a8a8]" />
    </div>
  );
}

export default function App() {
  return (
    <div className="h-[1600px] w-[720px] overflow-hidden bg-white font-['Roboto','Noto_Sans_CJK_SC',sans-serif] leading-none">
      <StatusBar />
      <Header />
      <Quote />
      <News />
      <PeriodTabs />
      <MaRow />
      <PriceChart />
      <VolumeRow />
      <VolumeChart />
      <TimeAxis />
      <Banner />
      <SectionTabs />
      <Cards />
      <BottomBar />
      <SystemNav />
    </div>
  );
}
